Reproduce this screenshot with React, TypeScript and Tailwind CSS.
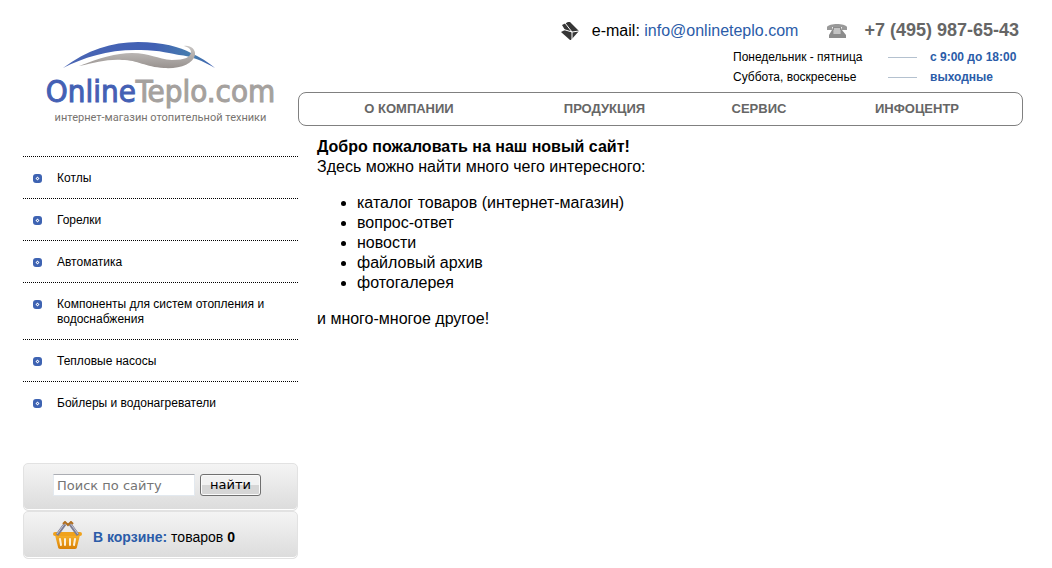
import { useState } from "react";

const categories = [
  "Котлы",
  "Горелки",
  "Автоматика",
  "Компоненты для систем отопления и водоснабжения",
  "Тепловые насосы",
  "Бойлеры и водонагреватели",
];

const menu = ["О КОМПАНИИ", "ПРОДУКЦИЯ", "СЕРВИС", "ИНФОЦЕНТР"];

const schedule = [
  { days: "Понедельник - пятница", hours: "с 9:00 до 18:00" },
  { days: "Суббота, воскресенье", hours: "выходные" },
];

const features = [
  "каталог товаров (интернет-магазин)",
  "вопрос-ответ",
  "новости",
  "файловый архив",
  "фотогалерея",
];

const Logo = () => (
  <a href="#" className="flex flex-col items-center whitespace-nowrap">
    <svg width="154" height="28" viewBox="0 0 154 28" className="mr-11" aria-hidden="true">
      <defs>
        <linearGradient id="wing" x1="0" x2="1">
          <stop offset="0" stopColor="#4a66b4" />
          <stop offset="0.6" stopColor="#4160b4" />
          <stop offset="0.85" stopColor="#477fae" />
          <stop offset="1" stopColor="#3a5bb0" />
        </linearGradient>
        <linearGradient id="wave" x1="0" x2="0" y1="0" y2="1">
          <stop offset="0" stopColor="#c9c6c4" />
          <stop offset="1" stopColor="#98928f" />
        </linearGradient>
      </defs>
      <path
        d="M1 27C25 9 50 1 76 1c25 0 42 5 53 11 9 4 17 9 24 15-12-7-24-12-36-13-6-1-20-5-38-5C48 8 22 16 1 27Z"
        fill="url(#wing)"
      />
      <path
        d="M17 25C38 17 54 12 70 12c18 0 25 6 40 7 13 0 19-3 19-8 0-3-3-5-7-6 6-1 12 3 11 9-2 9-15 14-31 13-19-1-26-8-42-8-15-1-27 3-43 6Z"
        fill="url(#wave)"
      />
    </svg>
    <span className="mt-1 font-['DejaVu_Sans_Condensed','DejaVu_Sans',sans-serif] text-[31px] leading-[37px] text-[#a5a19e] [-webkit-text-stroke:1px_currentColor]">
      <span className="text-[#4460b4]">Online</span>Teplo.com
    </span>
    <span className="font-[Roboto,sans-serif] text-[11px] leading-[15px] text-[#77736f]">
      интернет-магазин отопительной техники
    </span>
  </a>
);

const MailIcon = () => (
  <svg width="20" height="20" viewBox="0 0 20 20" aria-hidden="true">
    <path d="M8 1h2l9 9-8 9h-1L1 11l4-2-3-5Z" fill="#363636" />
    <path
      d="M5 2l7 9M12 11l7-1M12 11v8M2 8l10 3"
      stroke="#fff"
      strokeWidth="1"
      fill="none"
    />
  </svg>
);

const PhoneIcon = () => (
  <svg width="22" height="16" viewBox="0 0 22 16" aria-hidden="true">
    <path d="M1 7V4c2-4 18-4 20 0v3h-5V4H6v3Z" fill="#999" />
    <path d="M7 4h8l1 3 4 5v3H3v-3l3-5Z" fill="#8c8c8c" />
    <path
      d="M8 6h6M7 8h8M7 10h8M9 5v6M11 5v6M13 5v6"
      stroke="#eee"
      strokeWidth="1"
      strokeOpacity="0.7"
    />
  </svg>
);

const Bullet = () => (
  <svg width="9" height="9" viewBox="0 0 9 9" className="mt-[3px] shrink-0" aria-hidden="true">
    <rect width="9" height="9" rx="3" fill="#3e63b2" />
    <path d="M4.500 2.500l2 2-2 2-2-2Z" fill="#e9eef8" />
    <rect x="4" y="4" width="1" height="1" fill="#3e63b2" />
  </svg>
);

const BasketIcon = () => (
  <svg width="29" height="28" viewBox="0 0 29 28" aria-hidden="true">
    <defs>
      <linearGradient id="basket" x1="0" x2="0" y1="0" y2="1">
        <stop offset="0" stopColor="#f7b22c" />
        <stop offset="1" stopColor="#d98105" />
      </linearGradient>
    </defs>
    <path d="M2 14h25l-3 12c0 1-1 2-2 2H7c-1 0-2-1-2-2Z" fill="url(#basket)" />
    <path
      d="M7 18l1 6M12 18v6M17 18v6M22 18l-1 6"
      stroke="#fdf0d8"
      strokeWidth="2"
      strokeLinecap="round"
    />
    <rect y="11" width="29" height="4" rx="2" fill="#f0a21c" />
    <path d="M4 14L12 3M25 14L17 3" stroke="#7d7e93" strokeWidth="3" />
    <path d="M4 13L12 2M25 13L17 2" stroke="#c3c4d4" strokeWidth="1" />
    <path d="M10 3l2-2 3 3 3-3 2 2" stroke="#b06f20" strokeWidth="2" fill="none" />
  </svg>
);

const panel =
  "flex h-12 rounded-[5px] border border-[#e2e2e2] bg-linear-to-b from-[#f4f4f4] to-[#dcdcdc] pl-[29px] shadow-[inset_0_-1px_0_#fff]";

const Sidebar = () => {
  const [query, setQuery] = useState("");

  return (
    <aside className="w-[275px] shrink-0 pt-[41px]">
      <Logo />

      <ul className="mt-[31px] text-[12px] leading-[15px]">
        {categories.map((name) => (
          <li key={name} className="border-t border-dotted border-black">
            <a href="#" className="flex gap-[15px] pt-[14px] pr-5 pb-3 pl-[10px] text-black">
              <Bullet />
              <span>{name}</span>
            </a>
          </li>
        ))}
      </ul>

      <div className="mt-10">
        <form className={`${panel} items-start pt-[10px]`} onSubmit={(e) => e.preventDefault()}>
          <input
            type="text"
            aria-label="Поиск по сайту"
            placeholder="Поиск по сайту"
            value={query}
            onChange={(e) => setQuery(e.target.value)}
            className="h-[22px] w-[142px] border border-[#e3e9ef] border-t-[#abadb3] bg-white px-[3px] font-['DejaVu_Sans',sans-serif] text-[13px] placeholder:text-[#757575]"
          />
          <button
            type="submit"
            className="ml-[5px] h-[22px] w-[61px] rounded-[3px] border border-[#707070] bg-linear-to-b from-[#f2f2f2] from-50% to-[#d6d6d6] to-50% font-['DejaVu_Sans',sans-serif] text-[13px] leading-[20px] text-black shadow-[inset_0_0_0_1px_#fafafa]"
          >
            найти
          </button>
        </form>
        <div className={`${panel} items-center`}>
          <BasketIcon />
          <p className="ml-[11px] pt-1 text-[14px] leading-5">
            <a href="#" className="font-bold text-[#2b5ca8]">
              В корзине:
            </a>{" "}
            товаров <b>0</b>
          </p>
        </div>
      </div>
    </aside>
  );
};

const Header = () => (
  <header>
    <div className="flex h-[47px] items-center justify-end pt-[14px] pr-1">
      <MailIcon />
      <p className="ml-3 text-base">
        e-mail:{" "}
        <a href="mailto:info@onlineteplo.com" className="text-[#2b5ca8]">
          info@onlineteplo.com
        </a>
      </p>
      <span className="mr-4 ml-7">
        <PhoneIcon />
      </span>
      <a href="tel:+74959876543" className="text-[18px] font-bold text-[#666]">
        +7 (495) 987-65-43
      </a>
    </div>

    <table className="mr-1 ml-auto text-[12px] leading-5">
      <tbody>
        {schedule.map((row) => (
          <tr key={row.days}>
            <td className="w-[155px] p-0">{row.days}</td>
            <td className="w-[42px] p-0">
              <div className="w-[29px] border-t border-[#b4c1cf]" />
            </td>
            <td className="w-[89px] p-0 font-bold text-[#2b5ca8]">{row.hours}</td>
          </tr>
        ))}
      </tbody>
    </table>

    <nav className="mt-[5px] grid grid-cols-[220fr_171fr_138fr_178fr] rounded-lg border border-[#808080] pr-4 text-center text-[13px] leading-8 font-bold text-[#666]">
      {menu.map((item) => (
        <a key={item} href="#">
          {item}
        </a>
      ))}
    </nav>
  </header>
);

const App = () => (
  <div className="flex bg-white pr-[29px] pb-2 pl-[23px] font-['Liberation_Sans',Arial,sans-serif] text-black">
    <Sidebar />
    <div className="min-w-0 flex-1">
      <Header />
      <main className="px-[19px] pt-[11px] text-base leading-5">
        <h1 className="font-bold">Добро пожаловать на наш новый сайт!</h1>
        <p>Здесь можно найти много чего интересного:</p>
        <ul className="my-4 list-disc pl-10">
          {features.map((feature) => (
            <li key={feature}>{feature}</li>
          ))}
        </ul>
        <p>и много-многое другое!</p>
      </main>
    </div>
  </div>
);

export default App;
